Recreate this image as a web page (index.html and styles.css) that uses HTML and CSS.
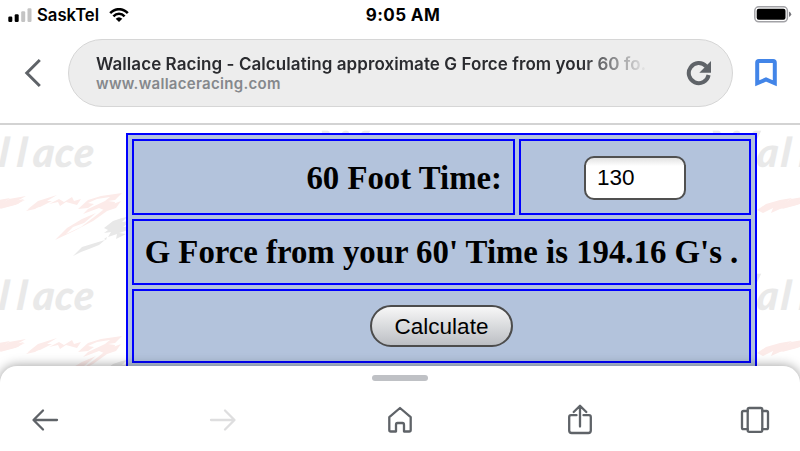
FILE: index.html
```
<!DOCTYPE html>
<html lang="en">
<head>
   <meta charset="UTF-8">
   <meta name="viewport" content="width=device-width, initial-scale=1.0">
   <title>Wallace Racing - Calculating approximate G Force</title>
   <link rel="stylesheet" href="styles.css">
</head>
<body>
    <div class="status">
        <div class="carrier">
            <svg class="signal" width="24" height="14" viewBox="0 0 24 14">
                <rect x="0.3" y="8.5" width="4" height="5.5" rx="1.2"/>
                <rect x="6.7" y="6.3" width="4" height="7.7" rx="1.2"/>
                <rect class="off" x="13.2" y="3.3" width="4" height="10.7" rx="1.2"/>
                <rect class="off" x="19.5" y="0.3" width="4" height="13.7" rx="1.2"/>
            </svg>
            <span class="carrier_name">SaskTel</span>
            <svg class="wifi" width="20" height="14" viewBox="0 0 20 14">
                <path d="M1.2 5.2C6 -0.2 14 -0.2 18.8 5.2M4.4 8.4C7.6 5 12.4 5 15.6 8.4" fill="none" stroke="#000" stroke-width="2.5"/>
                <path d="M6.7 10.7Q10 7.7 13.3 10.7L10 14Z"/>
            </svg>
        </div>
        <div class="time">9:05 AM</div>
        <svg class="battery" width="38" height="17" viewBox="0 0 38 17">
            <rect x="0.8" y="0.8" width="32.6" height="15" rx="4" fill="#fff" stroke="#a2a2a6" stroke-width="1.5"/>
            <rect x="2.7" y="2.8" width="28.8" height="11" rx="2"/>
            <path d="M35 5.5q2.2 1 2.2 2.8t-2.2 2.8z" fill="#77777c"/>
        </svg>
    </div>

    <div class="toolbar">
        <svg class="back" width="18" height="30" viewBox="0 0 18 30">
            <path d="M15.8 2L2.8 15L15.8 28" fill="none" stroke="#5f6368" stroke-width="3"/>
        </svg>
        <div class="address">
            <div class="address_text">
                <div class="title">Wallace Racing - Calculating approximate G Force from your 60 fo.</div>
                <div class="url">www.wallaceracing.com</div>
            </div>
            <svg class="reload" width="26" height="26" viewBox="0 0 26 26">
                <path d="M20.2 6.4A10 10 0 1 0 22.6 15" fill="none" stroke="#5f6368" stroke-width="4"/>
                <path d="M25 1V12.7H13.3Z" fill="#5f6368"/>
            </svg>
        </div>
        <svg class="bookmark" width="22" height="28" viewBox="0 0 22 28">
            <path d="M2.2 24.3V3.8Q2.2 2.1 3.9 2.1H18.1Q19.8 2.1 19.8 3.8V24.3L11 20.5Z" fill="none" stroke="#4285e8" stroke-width="4"/>
        </svg>
    </div>

    <div class="page">
        <svg class="wallpaper" width="800" height="243" viewBox="0 124 800 243">
            <defs>
                <g id="logo">
                    <text class="logo_text" transform="translate(0 37) skewX(-5)" x="-9 40 64 82 98 120 139"><tspan class="logo_cap">W</tspan>allace</text>
                    <g class="pink">
                        <path d="M41 80l9-6 14-4 12-2-8 6 8-2 14-3-6 5-20 5-9 4 2-5-10 5z"/>
                        <path d="M62 77l13-8 17-3-9 5 8-1-10 5-15 4 4-4z"/>
                        <path d="M92 81l12-9 7-2-5 4 5-1-10 6z"/>
                        <path d="M94 79l10-8 19-6-10 6 5 0-12 6z"/>
                        <path d="M115 74l10-5 5 3 8-5 2 4 7-2-4 6-11-3-6 4-2-4z"/>
                        <path d="M144 79l10-9 13-4 21-3-7 7-7 1 7 1-1 5-10 3-5-2-16 6 5-5 17-8 5-4-13 2-9 4 6 1-6 4z"/>
                        <path d="M121 110l12-12 15-9 14-6-12 10-11 4-7 7 15-7 17-13 10-8 13-5-5 7-9 3-14 10-19 10z"/>
                    </g>
                    <g class="grey">
                        <path d="M139 126l9-9 13-4 10-3-6 5-10 4-8 3z"/>
                        <path d="M170 109l3-2-1 3zM170 98l9-7 9-3 5-1-5 5 9-1-8 6 9-1-7 5-6 2 7 1-10 5 1-5-9 3 3-5-7 1 4-3z"/>
                    </g>
                </g>
            </defs>
            <use href="#logo" x="-66" y="130"/>
            <use href="#logo" x="325" y="130"/>
            <use href="#logo" x="716" y="130"/>
            <use href="#logo" x="-66" y="273"/>
            <use href="#logo" x="325" y="273"/>
            <use href="#logo" x="716" y="273"/>
        </svg>
        <table class="calc">
            <tr class="row_time">
                <td class="label">60 Foot Time:</td>
                <td class="value"><input class="time_input" type="text" value="130"></td>
            </tr>
            <tr class="row_result">
                <td class="answer" colspan="2">G Force from your 60' Time is 194.16 G's .</td>
            </tr>
            <tr class="row_button">
                <td colspan="2"><button class="btn">Calculate</button></td>
            </tr>
        </table>
    </div>

    <div class="sheet">
        <div class="handle"></div>
        <div class="nav">
            <svg width="30" height="34" viewBox="0 0 30 34">
                <path d="M27 17H4M13 7.5L3.5 17L13 26.5"/>
            </svg>
            <svg class="disabled" width="30" height="34" viewBox="0 0 30 34">
                <path d="M3 17H26M17 7.5L26.5 17L17 26.5"/>
            </svg>
            <svg width="30" height="34" viewBox="0 0 30 34">
                <path d="M15 5L25.7 14.2V27Q25.7 28.5 24.2 28.5H19V22Q19 20 17.5 20H12.5Q11 20 11 22V28.5H5.8Q4.3 28.5 4.3 27V14.2Z"/>
            </svg>
            <svg class="share" width="30" height="34" viewBox="0 0 30 34">
                <path d="M15 23.5V3.5M8.7 9L15 2.8L21.3 9M11.5 12.2H6Q4.2 12.2 4.2 14V27.5Q4.2 30 6.7 30H23.3Q25.8 30 25.8 27.5V14Q25.8 12.2 24 12.2H18.5"/>
            </svg>
            <svg width="30" height="34" viewBox="0 0 30 34">
                <rect x="7.7" y="5" width="14.6" height="23.8" rx="1.5"/>
                <path d="M7.7 8H3.5Q2 8 2 9.5V24.7Q2 26.2 3.5 26.2H7.7M22.3 8H26.5Q28 8 28 9.5V24.7Q28 26.2 26.5 26.2H22.3"/>
            </svg>
        </div>
    </div>
</body>
</html>
```
FILE: styles.css
```
* {
    box-sizing: border-box;
}
body {
    margin: 0;
    height: 451px;
    overflow: hidden;
    display: flex;
    flex-direction: column;
    background-color: #fff;
    font-family: Inter, "Liberation Sans", sans-serif;
}
svg {
    display: block;
    flex: none;
}
.status {
    height: 30px;
    padding: 0 8px;
    display: grid;
    grid-template-columns: 1fr auto 1fr;
    align-items: center;
    color: #000;
}
.carrier {
    display: flex;
    align-items: center;
}
.signal {
    margin-top: -1px;
}
.off {
    fill: #c4c4c4;
}
.carrier_name {
    width: 62px;
    margin-left: 5px;
    font-size: 16.7px;
    font-weight: 600;
    line-height: 28px;
}
.wifi {
    margin: -1px 0 0 10px;
}
.time {
    margin-left: 6px;
    font-size: 17px;
    font-weight: 700;
    letter-spacing: 0.4px;
}
.battery {
    justify-self: end;
    margin-top: -1px;
}
.toolbar {
    height: 95px;
    padding: 9px 23px 0 24px;
    border-bottom: 2px solid #d3d3d3;
    display: flex;
    align-items: flex-start;
}
.back {
    margin-top: 19px;
}
.address {
    width: 665px;
    height: 68px;
    margin-left: 26px;
    padding: 0 20px 0 27px;
    border: 1px solid #d6d6d6;
    border-radius: 34px;
    background-color: #ededed;
    display: flex;
    align-items: center;
    justify-content: space-between;
}
.address_text {
    width: 552px;
    overflow: hidden;
    white-space: nowrap;
}
.title {
    font-size: 17px;
    font-weight: 600;
    line-height: 20px;
    letter-spacing: 0.07px;
    color: #2a2b2f;
    -webkit-mask-image: linear-gradient(to right, #000 485px, transparent 552px);
    mask-image: linear-gradient(to right, #000 485px, transparent 552px);
}
.url {
    font-size: 15px;
    font-weight: 600;
    line-height: 19px;
    letter-spacing: 0.3px;
    color: #85888c;
}
.bookmark {
    margin: 20px 0 0 22px;
}
.page {
    height: 241px;
    position: relative;
    overflow: hidden;
    padding: 8px 0 0 126px;
}
.wallpaper {
    position: absolute;
    top: -1px;
    left: 0;
}
.logo_text {
    font-family: Lato, sans-serif;
    font-size: 41px;
    font-style: italic;
    font-weight: 900;
    fill: #e9e9e9;
}
.logo_cap {
    font-size: 50px;
}
.pink {
    fill: #fcebe9;
}
.grey {
    fill: #e8e8e8;
}
.calc {
    position: relative;
    width: 631px;
    table-layout: fixed;
    border: 2px solid #00f;
    border-bottom: 0;
    border-spacing: 4px;
    background-color: #b3c3dc;
    font-family: "Liberation Serif", serif;
    font-size: 32.8px;
    font-weight: bold;
    text-align: center;
    white-space: nowrap;
    color: #000;
}
.calc td {
    padding: 0;
    border: 2px solid #00f;
}
.row_time {
    height: 76px;
}
.row_result {
    height: 66px;
}
.row_button {
    height: 74px;
}
.calc .label {
    width: 383px;
    padding: 2px 11px 0 0;
    text-align: right;
}
.calc .answer {
    padding-top: 1px;
}
.time_input {
    display: block;
    width: 102px;
    height: 44px;
    margin: 1px auto 0;
    padding: 1px 11px 0;
    border: 2px solid #505050;
    border-radius: 10px;
    background: linear-gradient(#e2e2e2, #fff 8px);
    font-family: "Liberation Sans", sans-serif;
    font-size: 22.5px;
    color: #000;
}
.btn {
    display: block;
    width: 143px;
    height: 42px;
    margin: 0 auto;
    padding: 2px 0 0;
    border: 2px solid #4c4c4c;
    border-radius: 21px;
    background: linear-gradient(#f7f7f7, #bcbfc4);
    font-family: "Liberation Sans", sans-serif;
    font-size: 22.5px;
    color: #000;
}
.sheet {
    position: relative;
    height: 85px;
    padding-top: 9px;
    border-radius: 17px 17px 0 0;
    background-color: #fff;
    box-shadow: 0 0 12px rgba(0, 0, 0, 0.4);
}
.handle {
    width: 56px;
    height: 6px;
    margin: 0 auto;
    border-radius: 3px;
    background-color: #bfc1c5;
}
.nav {
    margin-top: 22px;
    padding: 0 30px;
    display: flex;
    justify-content: space-between;
}
.nav .share {
    margin: 0 -2px 0 2px;
}
.nav path, .nav rect {
    fill: none;
    stroke: #5f6368;
    stroke-width: 2.3;
    stroke-linecap: round;
    stroke-linejoin: round;
}
.nav .disabled path {
    stroke: #dededf;
}
```
